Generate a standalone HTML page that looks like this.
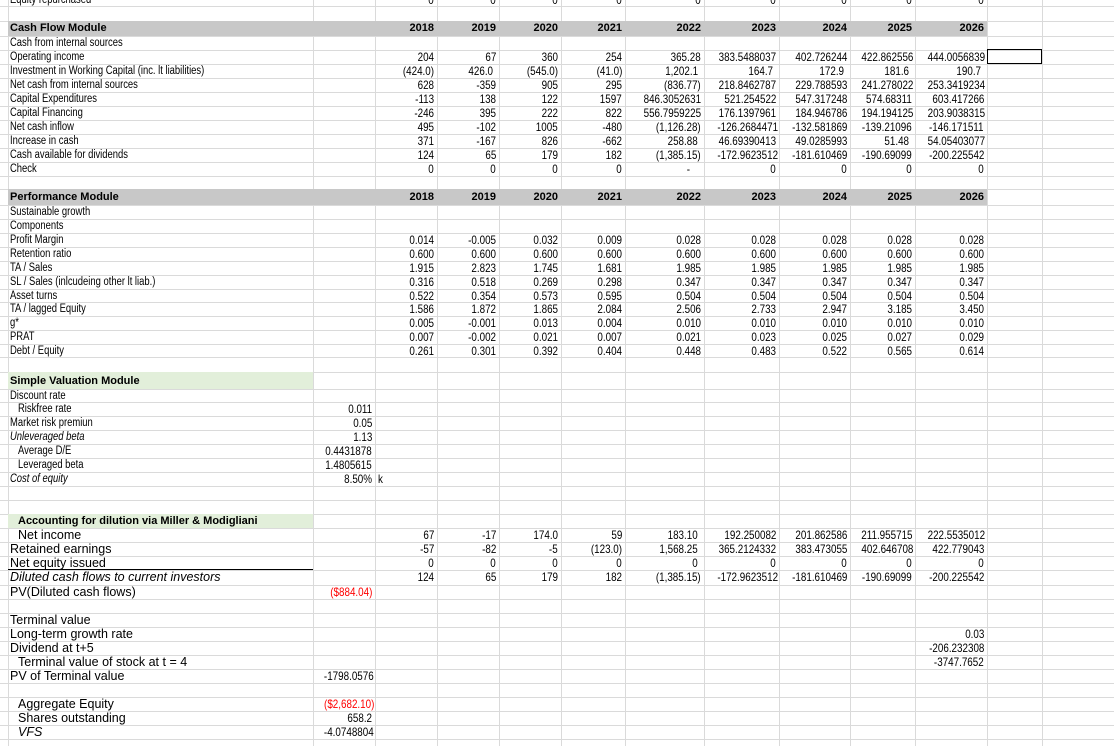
<!DOCTYPE html>
<html><head><meta charset="utf-8"><style>
body{margin:0;width:1114px;height:746px;overflow:hidden;background:#fff;position:relative;font-family:"Liberation Sans",sans-serif;color:#000}
.v{position:absolute;top:0;width:1px;height:746px;background:#dadada}
.h{position:absolute;left:0;width:1114px;height:1px;background:#dadada}
.fill{position:absolute}
.r{position:absolute;left:0;width:1114px;height:14px;line-height:14px;font-size:12px}
.r>div{position:absolute;top:0;height:14px;text-align:right;padding-right:3px;box-sizing:border-box;white-space:nowrap}
.r span{display:inline-block;transform:scaleX(.82);transform-origin:100% 50%;white-space:nowrap}
.r .A{text-align:left;padding-left:2px;font-size:11.5px}
.r .A span{transform-origin:0 50%}
.A{left:8px;width:305px}.B{left:313px;width:62px}.C{left:375px;width:62px}.D{left:437px;width:62px}.E{left:499px;width:62px}.F{left:561px;width:64px}.G{left:625px;width:79px}.H{left:704px;width:75px}.I{left:779px;width:71px}.J{left:850px;width:65px}.K{left:915px;width:72px}
.hd{font-weight:bold;font-size:11px!important}
.hd span{transform:none!important}
.big{font-size:12.5px!important}
.big span{transform:none!important}
.red{color:#f00}
.it{font-style:italic}
.ind{padding-left:10px!important}
</style></head><body>
<div class="v" style="left:8px"></div><div class="v" style="left:313px"></div><div class="v" style="left:375px"></div><div class="v" style="left:437px"></div><div class="v" style="left:499px"></div><div class="v" style="left:561px"></div><div class="v" style="left:625px"></div><div class="v" style="left:704px"></div><div class="v" style="left:779px"></div><div class="v" style="left:850px"></div><div class="v" style="left:915px"></div><div class="v" style="left:987px"></div><div class="v" style="left:1042px"></div>
<div class="h" style="top:6px"></div><div class="h" style="top:21px"></div><div class="h" style="top:36px"></div><div class="h" style="top:50px"></div><div class="h" style="top:64px"></div><div class="h" style="top:78px"></div><div class="h" style="top:92px"></div><div class="h" style="top:106px"></div><div class="h" style="top:120px"></div><div class="h" style="top:134px"></div><div class="h" style="top:148px"></div><div class="h" style="top:162px"></div><div class="h" style="top:176px"></div><div class="h" style="top:189px"></div><div class="h" style="top:205px"></div><div class="h" style="top:219px"></div><div class="h" style="top:233px"></div><div class="h" style="top:247px"></div><div class="h" style="top:261px"></div><div class="h" style="top:275px"></div><div class="h" style="top:289px"></div><div class="h" style="top:302px"></div><div class="h" style="top:316px"></div><div class="h" style="top:330px"></div><div class="h" style="top:344px"></div><div class="h" style="top:357px"></div><div class="h" style="top:372px"></div><div class="h" style="top:389px"></div><div class="h" style="top:402px"></div><div class="h" style="top:416px"></div><div class="h" style="top:430px"></div><div class="h" style="top:444px"></div><div class="h" style="top:458px"></div><div class="h" style="top:472px"></div><div class="h" style="top:486px"></div><div class="h" style="top:500px"></div><div class="h" style="top:514px"></div><div class="h" style="top:528px"></div><div class="h" style="top:542px"></div><div class="h" style="top:556px"></div><div class="h" style="top:570px"></div><div class="h" style="top:585px"></div><div class="h" style="top:599px"></div><div class="h" style="top:613px"></div><div class="h" style="top:627px"></div><div class="h" style="top:641px"></div><div class="h" style="top:655px"></div><div class="h" style="top:669px"></div><div class="h" style="top:683px"></div><div class="h" style="top:697px"></div><div class="h" style="top:711px"></div><div class="h" style="top:725px"></div><div class="h" style="top:739px"></div>
<div class="fill" style="left:8px;top:21px;width:979px;height:15px;background:#c8c8c8"></div>
<div class="fill" style="left:8px;top:189px;width:979px;height:16px;background:#c8c8c8"></div>
<div class="fill" style="left:8px;top:372px;width:305px;height:17px;background:#e2efda"></div>
<div class="fill" style="left:8px;top:514px;width:305px;height:14px;background:#e2efda"></div>
<div class="fill" style="left:8px;top:569px;width:305px;height:1px;background:#000"></div>
<div class="fill" style="left:987px;top:49px;width:55px;height:15px;border:1px solid #000;box-sizing:border-box"></div>

<div class="r" style="top:-7px"><div class="A"><span>Equity repurchased</span></div><div class="C"><span>0</span></div><div class="D"><span>0</span></div><div class="E"><span>0</span></div><div class="F"><span>0</span></div><div class="G"><span>0</span></div><div class="H"><span>0</span></div><div class="I"><span>0</span></div><div class="J"><span>0</span></div><div class="K"><span>0</span></div></div>

<div class="r" style="top:21px;height:15px;line-height:15px"><div class="A hd">Cash Flow Module</div><div class="C hd">2018</div><div class="D hd">2019</div><div class="E hd">2020</div><div class="F hd">2021</div><div class="G hd">2022</div><div class="H hd">2023</div><div class="I hd">2024</div><div class="J hd">2025</div><div class="K hd">2026</div></div>
<div class="r" style="top:36px"><div class="A"><span>Cash from internal sources</span></div></div>
<div class="r" style="top:50px"><div class="A"><span>Operating income</span></div><div class="C"><span>204</span></div><div class="D"><span>67</span></div><div class="E"><span>360</span></div><div class="F"><span>254</span></div><div class="G"><span>365.28</span></div><div class="H"><span>383.5488037</span></div><div class="I"><span>402.726244</span></div><div class="J"><span>422.862556</span></div><div class="K"><span>444.0056839</span></div></div>
<div class="r" style="top:64px"><div class="A"><span>Investment in Working Capital (inc. lt liabilities)</span></div><div class="C"><span>(424.0)</span></div><div class="D" style="padding-right:6px"><span>426.0</span></div><div class="E"><span>(545.0)</span></div><div class="F"><span>(41.0)</span></div><div class="G" style="padding-right:6px"><span>1,202.1</span></div><div class="H" style="padding-right:6px"><span>164.7</span></div><div class="I" style="padding-right:6px"><span>172.9</span></div><div class="J" style="padding-right:6px"><span>181.6</span></div><div class="K" style="padding-right:6px"><span>190.7</span></div></div>
<div class="r" style="top:78px"><div class="A"><span>Net cash from internal sources</span></div><div class="C"><span>628</span></div><div class="D"><span>-359</span></div><div class="E"><span>905</span></div><div class="F"><span>295</span></div><div class="G"><span>(836.77)</span></div><div class="H"><span>218.8462787</span></div><div class="I"><span>229.788593</span></div><div class="J"><span>241.278022</span></div><div class="K"><span>253.3419234</span></div></div>
<div class="r" style="top:92px"><div class="A"><span>Capital Expenditures</span></div><div class="C"><span>-113</span></div><div class="D"><span>138</span></div><div class="E"><span>122</span></div><div class="F"><span>1597</span></div><div class="G"><span>846.3052631</span></div><div class="H"><span>521.254522</span></div><div class="I"><span>547.317248</span></div><div class="J"><span>574.68311</span></div><div class="K"><span>603.417266</span></div></div>
<div class="r" style="top:106px"><div class="A"><span>Capital Financing</span></div><div class="C"><span>-246</span></div><div class="D"><span>395</span></div><div class="E"><span>222</span></div><div class="F"><span>822</span></div><div class="G"><span>556.7959225</span></div><div class="H"><span>176.1397961</span></div><div class="I"><span>184.946786</span></div><div class="J"><span>194.194125</span></div><div class="K"><span>203.9038315</span></div></div>
<div class="r" style="top:120px"><div class="A"><span>Net cash inflow</span></div><div class="C"><span>495</span></div><div class="D"><span>-102</span></div><div class="E"><span>1005</span></div><div class="F"><span>-480</span></div><div class="G"><span>(1,126.28)</span></div><div class="H"><span>-126.2684471</span></div><div class="I"><span>-132.581869</span></div><div class="J"><span>-139.21096</span></div><div class="K"><span>-146.171511</span></div></div>
<div class="r" style="top:134px"><div class="A"><span>Increase in cash</span></div><div class="C"><span>371</span></div><div class="D"><span>-167</span></div><div class="E"><span>826</span></div><div class="F"><span>-662</span></div><div class="G" style="padding-right:6px"><span>258.88</span></div><div class="H"><span>46.69390413</span></div><div class="I"><span>49.0285993</span></div><div class="J" style="padding-right:6px"><span>51.48</span></div><div class="K"><span>54.05403077</span></div></div>
<div class="r" style="top:148px"><div class="A"><span>Cash available for dividends</span></div><div class="C"><span>124</span></div><div class="D"><span>65</span></div><div class="E"><span>179</span></div><div class="F"><span>182</span></div><div class="G"><span>(1,385.15)</span></div><div class="H"><span>-172.9623512</span></div><div class="I"><span>-181.610469</span></div><div class="J"><span>-190.69099</span></div><div class="K"><span>-200.225542</span></div></div>
<div class="r" style="top:162px"><div class="A"><span>Check</span></div><div class="C"><span>0</span></div><div class="D"><span>0</span></div><div class="E"><span>0</span></div><div class="F"><span>0</span></div><div class="G" style="padding-right:14px"><span>-</span></div><div class="H"><span>0</span></div><div class="I"><span>0</span></div><div class="J"><span>0</span></div><div class="K"><span>0</span></div></div>

<div class="r" style="top:189px;height:16px;line-height:16px"><div class="A hd">Performance Module</div><div class="C hd">2018</div><div class="D hd">2019</div><div class="E hd">2020</div><div class="F hd">2021</div><div class="G hd">2022</div><div class="H hd">2023</div><div class="I hd">2024</div><div class="J hd">2025</div><div class="K hd">2026</div></div>
<div class="r" style="top:205px"><div class="A"><span>Sustainable growth</span></div></div>
<div class="r" style="top:219px"><div class="A"><span>Components</span></div></div>
<div class="r" style="top:233px"><div class="A"><span>Profit Margin</span></div><div class="C"><span>0.014</span></div><div class="D"><span>-0.005</span></div><div class="E"><span>0.032</span></div><div class="F"><span>0.009</span></div><div class="G"><span>0.028</span></div><div class="H"><span>0.028</span></div><div class="I"><span>0.028</span></div><div class="J"><span>0.028</span></div><div class="K"><span>0.028</span></div></div>
<div class="r" style="top:247px"><div class="A"><span>Retention ratio</span></div><div class="C"><span>0.600</span></div><div class="D"><span>0.600</span></div><div class="E"><span>0.600</span></div><div class="F"><span>0.600</span></div><div class="G"><span>0.600</span></div><div class="H"><span>0.600</span></div><div class="I"><span>0.600</span></div><div class="J"><span>0.600</span></div><div class="K"><span>0.600</span></div></div>
<div class="r" style="top:261px"><div class="A"><span>TA / Sales</span></div><div class="C"><span>1.915</span></div><div class="D"><span>2.823</span></div><div class="E"><span>1.745</span></div><div class="F"><span>1.681</span></div><div class="G"><span>1.985</span></div><div class="H"><span>1.985</span></div><div class="I"><span>1.985</span></div><div class="J"><span>1.985</span></div><div class="K"><span>1.985</span></div></div>
<div class="r" style="top:275px"><div class="A"><span>SL / Sales (inlcudeing other lt liab.)</span></div><div class="C"><span>0.316</span></div><div class="D"><span>0.518</span></div><div class="E"><span>0.269</span></div><div class="F"><span>0.298</span></div><div class="G"><span>0.347</span></div><div class="H"><span>0.347</span></div><div class="I"><span>0.347</span></div><div class="J"><span>0.347</span></div><div class="K"><span>0.347</span></div></div>
<div class="r" style="top:289px"><div class="A"><span>Asset turns</span></div><div class="C"><span>0.522</span></div><div class="D"><span>0.354</span></div><div class="E"><span>0.573</span></div><div class="F"><span>0.595</span></div><div class="G"><span>0.504</span></div><div class="H"><span>0.504</span></div><div class="I"><span>0.504</span></div><div class="J"><span>0.504</span></div><div class="K"><span>0.504</span></div></div>
<div class="r" style="top:302px"><div class="A"><span>TA / lagged Equity</span></div><div class="C"><span>1.586</span></div><div class="D"><span>1.872</span></div><div class="E"><span>1.865</span></div><div class="F"><span>2.084</span></div><div class="G"><span>2.506</span></div><div class="H"><span>2.733</span></div><div class="I"><span>2.947</span></div><div class="J"><span>3.185</span></div><div class="K"><span>3.450</span></div></div>
<div class="r" style="top:316px"><div class="A"><span>g*</span></div><div class="C"><span>0.005</span></div><div class="D"><span>-0.001</span></div><div class="E"><span>0.013</span></div><div class="F"><span>0.004</span></div><div class="G"><span>0.010</span></div><div class="H"><span>0.010</span></div><div class="I"><span>0.010</span></div><div class="J"><span>0.010</span></div><div class="K"><span>0.010</span></div></div>
<div class="r" style="top:330px"><div class="A"><span>PRAT</span></div><div class="C"><span>0.007</span></div><div class="D"><span>-0.002</span></div><div class="E"><span>0.021</span></div><div class="F"><span>0.007</span></div><div class="G"><span>0.021</span></div><div class="H"><span>0.023</span></div><div class="I"><span>0.025</span></div><div class="J"><span>0.027</span></div><div class="K"><span>0.029</span></div></div>
<div class="r" style="top:344px"><div class="A"><span>Debt / Equity</span></div><div class="C"><span>0.261</span></div><div class="D"><span>0.301</span></div><div class="E"><span>0.392</span></div><div class="F"><span>0.404</span></div><div class="G"><span>0.448</span></div><div class="H"><span>0.483</span></div><div class="I"><span>0.522</span></div><div class="J"><span>0.565</span></div><div class="K"><span>0.614</span></div></div>

<div class="r" style="top:372px;height:17px;line-height:19px"><div class="A hd">Simple Valuation Module</div></div>
<div class="r" style="top:389px"><div class="A"><span>Discount rate</span></div></div>
<div class="r" style="top:402px"><div class="A ind"><span>Riskfree rate</span></div><div class="B"><span>0.011</span></div></div>
<div class="r" style="top:416px"><div class="A"><span>Market risk premiun</span></div><div class="B"><span>0.05</span></div></div>
<div class="r" style="top:430px"><div class="A it"><span>Unleveraged beta</span></div><div class="B"><span>1.13</span></div></div>
<div class="r" style="top:444px"><div class="A ind"><span>Average D/E</span></div><div class="B"><span>0.4431878</span></div></div>
<div class="r" style="top:458px"><div class="A ind"><span>Leveraged beta</span></div><div class="B"><span>1.4805615</span></div></div>
<div class="r" style="top:472px"><div class="A it"><span>Cost of equity</span></div><div class="B"><span>8.50%</span></div><div class="C" style="text-align:left;padding-left:3px"><span style="transform-origin:0 50%">k</span></div></div>

<div class="r" style="top:514px"><div class="A hd ind">Accounting for dilution via Miller &amp; Modigliani</div></div>
<div class="r" style="top:528px"><div class="A big ind"><span>Net income</span></div><div class="C"><span>67</span></div><div class="D"><span>-17</span></div><div class="E"><span>174.0</span></div><div class="F"><span>59</span></div><div class="G" style="padding-right:6px"><span>183.10</span></div><div class="H"><span>192.250082</span></div><div class="I"><span>201.862586</span></div><div class="J"><span>211.955715</span></div><div class="K"><span>222.5535012</span></div></div>
<div class="r" style="top:542px"><div class="A big"><span>Retained earnings</span></div><div class="C"><span>-57</span></div><div class="D"><span>-82</span></div><div class="E"><span>-5</span></div><div class="F"><span>(123.0)</span></div><div class="G" style="padding-right:6px"><span>1,568.25</span></div><div class="H"><span>365.2124332</span></div><div class="I"><span>383.473055</span></div><div class="J"><span>402.646708</span></div><div class="K"><span>422.779043</span></div></div>
<div class="r" style="top:556px"><div class="A big"><span>Net equity issued</span></div><div class="C"><span>0</span></div><div class="D"><span>0</span></div><div class="E"><span>0</span></div><div class="F"><span>0</span></div><div class="G" style="padding-right:6px"><span>0</span></div><div class="H"><span>0</span></div><div class="I"><span>0</span></div><div class="J"><span>0</span></div><div class="K"><span>0</span></div></div>
<div class="r" style="top:570px"><div class="A big it"><span>Diluted cash flows to current investors</span></div><div class="C"><span>124</span></div><div class="D"><span>65</span></div><div class="E"><span>179</span></div><div class="F"><span>182</span></div><div class="G"><span>(1,385.15)</span></div><div class="H"><span>-172.9623512</span></div><div class="I"><span>-181.610469</span></div><div class="J"><span>-190.69099</span></div><div class="K"><span>-200.225542</span></div></div>
<div class="r" style="top:585px"><div class="A big"><span>PV(Diluted cash flows)</span></div><div class="B red"><span>($884.04)</span></div></div>
<div class="r" style="top:613px"><div class="A big"><span>Terminal value</span></div></div>
<div class="r" style="top:627px"><div class="A big"><span>Long-term growth rate</span></div><div class="K"><span>0.03</span></div></div>
<div class="r" style="top:641px"><div class="A big"><span>Dividend at t+5</span></div><div class="K"><span>-206.232308</span></div></div>
<div class="r" style="top:655px"><div class="A big ind"><span>Terminal value of stock at t = 4</span></div><div class="K"><span>-3747.7652</span></div></div>
<div class="r" style="top:669px"><div class="A big"><span>PV of Terminal value</span></div><div class="B"><span>-1798.0576</span></div></div>
<div class="r" style="top:697px"><div class="A big ind"><span>Aggregate Equity</span></div><div class="B red"><span>($2,682.10)</span></div></div>
<div class="r" style="top:711px"><div class="A big ind"><span>Shares outstanding</span></div><div class="B"><span>658.2</span></div></div>
<div class="r" style="top:725px"><div class="A big it ind"><span>VFS</span></div><div class="B"><span>-4.0748804</span></div></div>
</body></html>
